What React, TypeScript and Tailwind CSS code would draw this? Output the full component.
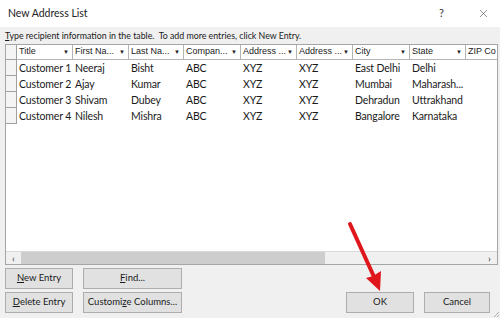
import { X } from "lucide-react"

const cols = [
  { label: "Title", w: 56 },
  { label: "First Na...", w: 56 },
  { label: "Last Na...", w: 55 },
  { label: "Compan...", w: 57 },
  { label: "Address ...", w: 56 },
  { label: "Address ...", w: 56 },
  { label: "City", w: 57 },
  { label: "State", w: 56 },
  { label: "ZIP Co", w: 40 },
]

const rows = [
  ["Customer 1", "Neeraj", "Bisht", "ABC", "XYZ", "XYZ", "East Delhi", "Delhi", ""],
  ["Customer 2", "Ajay", "Kumar", "ABC", "XYZ", "XYZ", "Mumbai", "Maharash...", ""],
  ["Customer 3", "Shivam", "Dubey", "ABC", "XYZ", "XYZ", "Dehradun", "Uttrakhand", ""],
  ["Customer 4", "Nilesh", "Mishra", "ABC", "XYZ", "XYZ", "Bangalore", "Karnataka", ""],
]

function DlgButton({ children, w }: { children: React.ReactNode; w: string }) {
  return (
    <button
      className={`${w} h-[21px] bg-[#e1e1e1] border border-[#adadad] text-[9.5px] text-[#1a1a1a] flex items-center justify-center whitespace-nowrap`}
    >
      {children}
    </button>
  )
}

export default function App() {
  return (
    <div
      className="relative w-[500px] h-[318px] bg-[#f0f0f0] overflow-hidden text-[#1a1a1a]"
      style={{ fontFamily: 'Lato, "Noto Sans", sans-serif' }}
    >
      {/* title bar */}
      <div className="h-[27px] bg-white flex items-center pl-[8px] pr-[10px]">
        <span className="text-[10.5px] text-[#222]">New Address List</span>
        <span className="ml-auto mr-[33px] text-[11px] text-[#333]">?</span>
        <X className="w-[13px] h-[13px] text-[#333]" strokeWidth={1} />
      </div>

      <div className="h-[17px] leading-[17px] pl-[5px] text-[8.8px] whitespace-nowrap">
        <span className="underline">T</span>ype recipient information in the table.&nbsp; To add more entries, click New Entry.
      </div>

      {/* table */}
      <div className="ml-[5px] w-[493px] h-[221px] border border-[#a5a5a5] bg-white flex flex-col overflow-hidden">
        <div className="flex h-[15px] shrink-0">
          <div className="w-[11px] shrink-0 bg-[#f4f4f4] border-r border-b border-[#a0a0a0]" />
          {cols.map((c, i) => (
            <div
              key={i}
              className="shrink-0 h-full flex items-center pl-[2px] pr-[3px] border-r border-b border-[#b5b5b5] whitespace-nowrap overflow-hidden"
              style={{ width: c.w, fontFamily: '"Liberation Sans", Arial, sans-serif' }}
            >
              <span className="text-[9px]">{c.label}</span>
              {i < 8 && <span className="ml-auto text-[6px] text-[#222]">▼</span>}
            </div>
          ))}
        </div>

        <div className="flex-1">
          {rows.map((r, ri) => (
            <div key={ri} className="flex h-[16px]">
              <div className="w-[11px] shrink-0 bg-[#f4f4f4] border-r border-b border-[#a0a0a0]" />
              {r.map((v, ci) => (
                <div
                  key={ci}
                  className="shrink-0 pl-[2px] text-[10.5px] tracking-[-0.15px] leading-[16px] whitespace-nowrap overflow-hidden"
                  style={{ width: cols[ci].w }}
                >
                  {v}
                </div>
              ))}
            </div>
          ))}
        </div>

        {/* horizontal scrollbar */}
        <div className="h-[13px] shrink-0 bg-[#f0f0f0] border-t border-[#d8d8d8] flex items-center">
          <span className="w-[15px] text-center text-[10px] leading-none text-[#333]">‹</span>
          <div className="w-[304px] h-full bg-[#cdcdcd]" />
          <span className="ml-auto w-[15px] text-center text-[10px] leading-none text-[#333]">›</span>
        </div>
      </div>

      {/* buttons */}
      <div className="flex px-[5px] pt-[3px]">
        <div className="grid grid-cols-[68px_99px] gap-x-[10px] gap-y-[3px]">
          <DlgButton w="w-[68px]"><span><span className="underline">N</span>ew Entry</span></DlgButton>
          <DlgButton w="w-[99px]"><span><span className="underline">F</span>ind...</span></DlgButton>
          <DlgButton w="w-[68px]"><span><span className="underline">D</span>elete Entry</span></DlgButton>
          <DlgButton w="w-[99px]"><span>Customi<span className="underline">z</span>e Columns...</span></DlgButton>
        </div>
        <div className="ml-auto mr-[5px] flex items-end gap-[10px]">
          <DlgButton w="w-[68px]">OK</DlgButton>
          <DlgButton w="w-[66px]">Cancel</DlgButton>
        </div>
      </div>

      {/* red arrow annotation */}
      <svg className="absolute left-0 top-0 pointer-events-none" width="500" height="318">
        <line x1="350" y1="224" x2="375" y2="279" stroke="#e0161d" strokeWidth="4" strokeLinecap="round" />
        <polygon points="380,291 366,278 373,276 381,271" fill="#e0161d" />
      </svg>

      {/* size grip */}
      <svg className="absolute right-0 bottom-0" width="8" height="8">
        <line x1="7" y1="2" x2="2" y2="7" stroke="#b0b0b0" strokeWidth="1" />
        <line x1="7" y1="5" x2="5" y2="7" stroke="#b0b0b0" strokeWidth="1" />
      </svg>
    </div>
  )
}
